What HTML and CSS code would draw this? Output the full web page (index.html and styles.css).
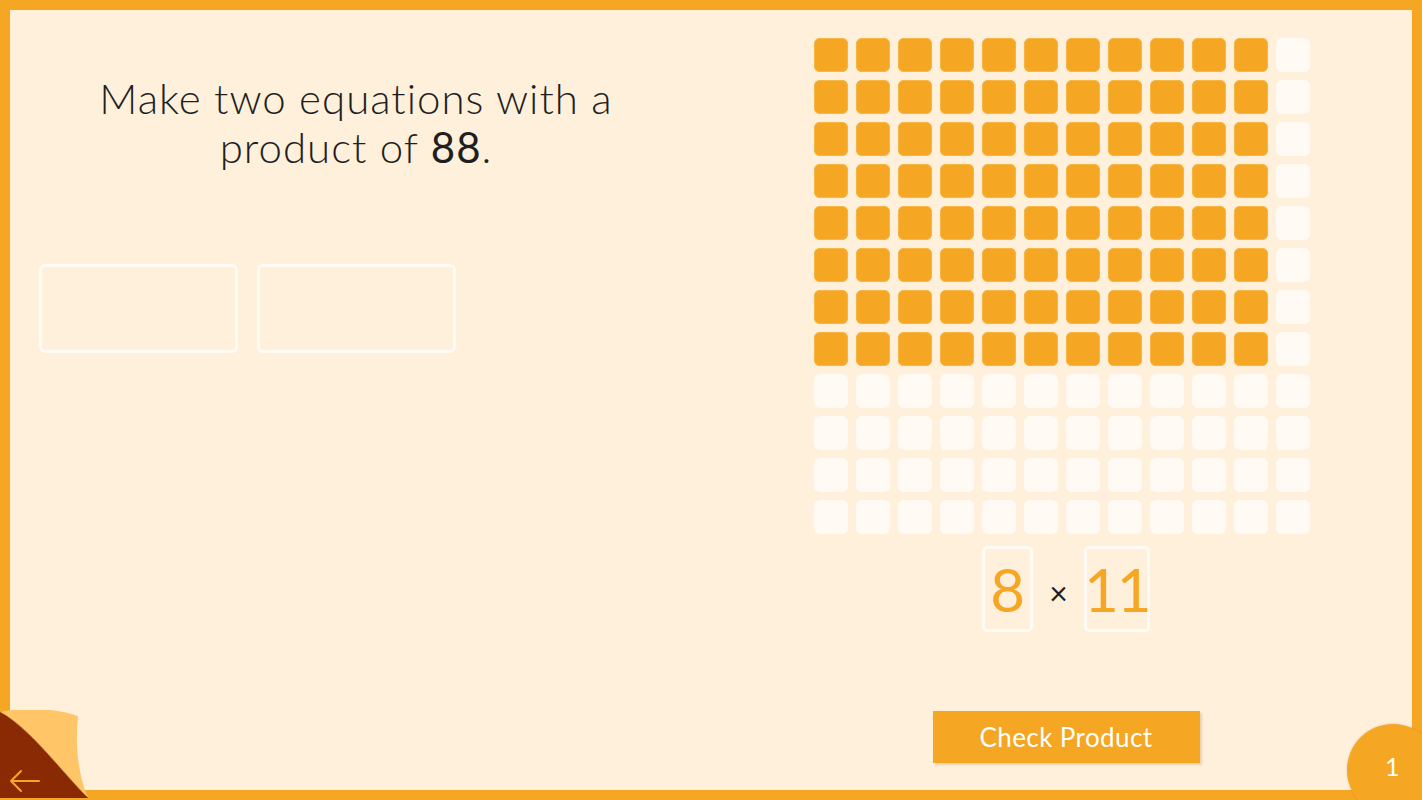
FILE: index.html
```html
<!DOCTYPE html>
<html>
<head>
<meta charset="utf-8">
<link rel="stylesheet" href="styles.css">
</head>
<body>
<div class="frame">
  <section class="left">
    <h1 class="prompt">Make two equations with a<br>product of <span class="num">88</span>.</h1>
    <div class="slots">
      <div class="slot"></div>
      <div class="slot"></div>
    </div>
  </section>
  <section class="right">
    <div class="grid">
      <i class="on"></i><i class="on"></i><i class="on"></i><i class="on"></i><i class="on"></i><i class="on"></i><i class="on"></i><i class="on"></i><i class="on"></i><i class="on"></i><i class="on"></i><i></i>
      <i class="on"></i><i class="on"></i><i class="on"></i><i class="on"></i><i class="on"></i><i class="on"></i><i class="on"></i><i class="on"></i><i class="on"></i><i class="on"></i><i class="on"></i><i></i>
      <i class="on"></i><i class="on"></i><i class="on"></i><i class="on"></i><i class="on"></i><i class="on"></i><i class="on"></i><i class="on"></i><i class="on"></i><i class="on"></i><i class="on"></i><i></i>
      <i class="on"></i><i class="on"></i><i class="on"></i><i class="on"></i><i class="on"></i><i class="on"></i><i class="on"></i><i class="on"></i><i class="on"></i><i class="on"></i><i class="on"></i><i></i>
      <i class="on"></i><i class="on"></i><i class="on"></i><i class="on"></i><i class="on"></i><i class="on"></i><i class="on"></i><i class="on"></i><i class="on"></i><i class="on"></i><i class="on"></i><i></i>
      <i class="on"></i><i class="on"></i><i class="on"></i><i class="on"></i><i class="on"></i><i class="on"></i><i class="on"></i><i class="on"></i><i class="on"></i><i class="on"></i><i class="on"></i><i></i>
      <i class="on"></i><i class="on"></i><i class="on"></i><i class="on"></i><i class="on"></i><i class="on"></i><i class="on"></i><i class="on"></i><i class="on"></i><i class="on"></i><i class="on"></i><i></i>
      <i class="on"></i><i class="on"></i><i class="on"></i><i class="on"></i><i class="on"></i><i class="on"></i><i class="on"></i><i class="on"></i><i class="on"></i><i class="on"></i><i class="on"></i><i></i>
      <i></i><i></i><i></i><i></i><i></i><i></i><i></i><i></i><i></i><i></i><i></i><i></i>
      <i></i><i></i><i></i><i></i><i></i><i></i><i></i><i></i><i></i><i></i><i></i><i></i>
      <i></i><i></i><i></i><i></i><i></i><i></i><i></i><i></i><i></i><i></i><i></i><i></i>
      <i></i><i></i><i></i><i></i><i></i><i></i><i></i><i></i><i></i><i></i><i></i><i></i>
    </div>
    <div class="equation">
      <div class="factor f-one">8</div>
      <span class="times">×</span>
      <div class="factor f-two">11</div>
    </div>
    <button class="check">Check Product</button>
  </section>

  <div class="corner">
    <svg width="90" height="90" viewBox="0 0 90 90">
      <path d="M0 2 C30 18 60 60 88 88 L0 88 Z" fill="#8a2a04"/>
      <path d="M0 2 C25 -3 55 -2 78 6 C75 35 78 65 88 88 C60 60 30 18 0 2 Z" fill="#ffc566"/>
      <path d="M0 2 C30 18 60 60 88 88" fill="none" stroke="#6e2203" stroke-width="0.8" opacity="0.5"/>
      <path d="M39 71 H11 M21 61 L11 71 L21 81" fill="none" stroke="#f5a623" stroke-width="2" stroke-linecap="round" stroke-linejoin="round"/>
    </svg>
  </div>
  <div class="page-badge">1</div>
</div>
</body>
</html>
```
FILE: styles.css
```css
html, body {
  margin: 0;
  padding: 0;
}
body {
  width: 1422px;
  height: 800px;
  overflow: hidden;
  font-family: "Lato", "Open Sans", sans-serif;
}
.frame {
  position: relative;
  box-sizing: border-box;
  width: 1422px;
  height: 800px;
  border: 10px solid #f5a623;
  background: #fef0db;
  display: flex;
}
.left {
  width: 692px;
  display: flex;
  flex-direction: column;
}
.prompt {
  margin: 64px 0 0 0;
  font-weight: 300;
  font-size: 42px;
  line-height: 49px;
  color: #1f1f1f;
  text-align: center;
  letter-spacing: 1px;
}
.prompt .num {
  font-weight: 400;
}
.slots {
  display: flex;
  gap: 19px;
  margin: 92px 0 0 29px;
}
.slot {
  box-sizing: border-box;
  width: 199px;
  height: 89px;
  border: 3px solid #fffaf3;
  border-radius: 6px;
}
.right {
  padding: 28px 0 0 112px;
  width: 496px;
  display: flex;
  flex-direction: column;
  align-items: center;
}
.grid {
  display: grid;
  grid-template-columns: repeat(12, 34px);
  grid-auto-rows: 34px;
  gap: 8px;
}
.grid i {
  display: block;
  border-radius: 6px;
  background: #fffaf3;
}
.grid i.on {
  background: #f5a623;
  box-shadow: inset 0 0 0 1px #f7b544;
}
.equation {
  display: flex;
  align-items: center;
  gap: 16px;
  margin-top: 12px;
  margin-left: 8px;
}
.factor {
  box-sizing: border-box;
  height: 86px;
  border: 3px solid #fffaf3;
  border-radius: 5px;
  color: #f5a623;
  font-size: 60px;
  font-weight: 400;
  display: flex;
  align-items: center;
  justify-content: center;
  line-height: 1;
  letter-spacing: -2px;
}
.f-one { width: 51px; letter-spacing: 0; }
.f-two { width: 66px; }
.times {
  font-size: 32px;
  color: #1f1f1f;
  font-weight: 400;
  margin-top: 6px;
}
.check {
  margin-top: 79px;
  margin-left: 8px;
  width: 267px;
  height: 52px;
  border: none;
  background: #f5a623;
  color: #ffffff;
  font-family: "Lato", "Open Sans", sans-serif;
  font-weight: 400;
  font-size: 26px;
  letter-spacing: 0.4px;
  box-shadow: 2px 2px 2px rgba(170, 120, 60, 0.25);
  padding: 0;
}
.corner {
  position: absolute;
  left: -10px;
  bottom: -10px;
  width: 90px;
  height: 90px;
  line-height: 0;
}
.page-badge {
  position: absolute;
  left: 1337px;
  top: 714px;
  width: 92px;
  height: 92px;
  border-radius: 50%;
  background: #f5a623;
  box-shadow: 0 0 2px rgba(150, 90, 20, 0.35);
  color: #ffffff;
  font-size: 25px;
  box-sizing: border-box;
  padding: 30px 0 0 38px;
  line-height: 1;
}
```
